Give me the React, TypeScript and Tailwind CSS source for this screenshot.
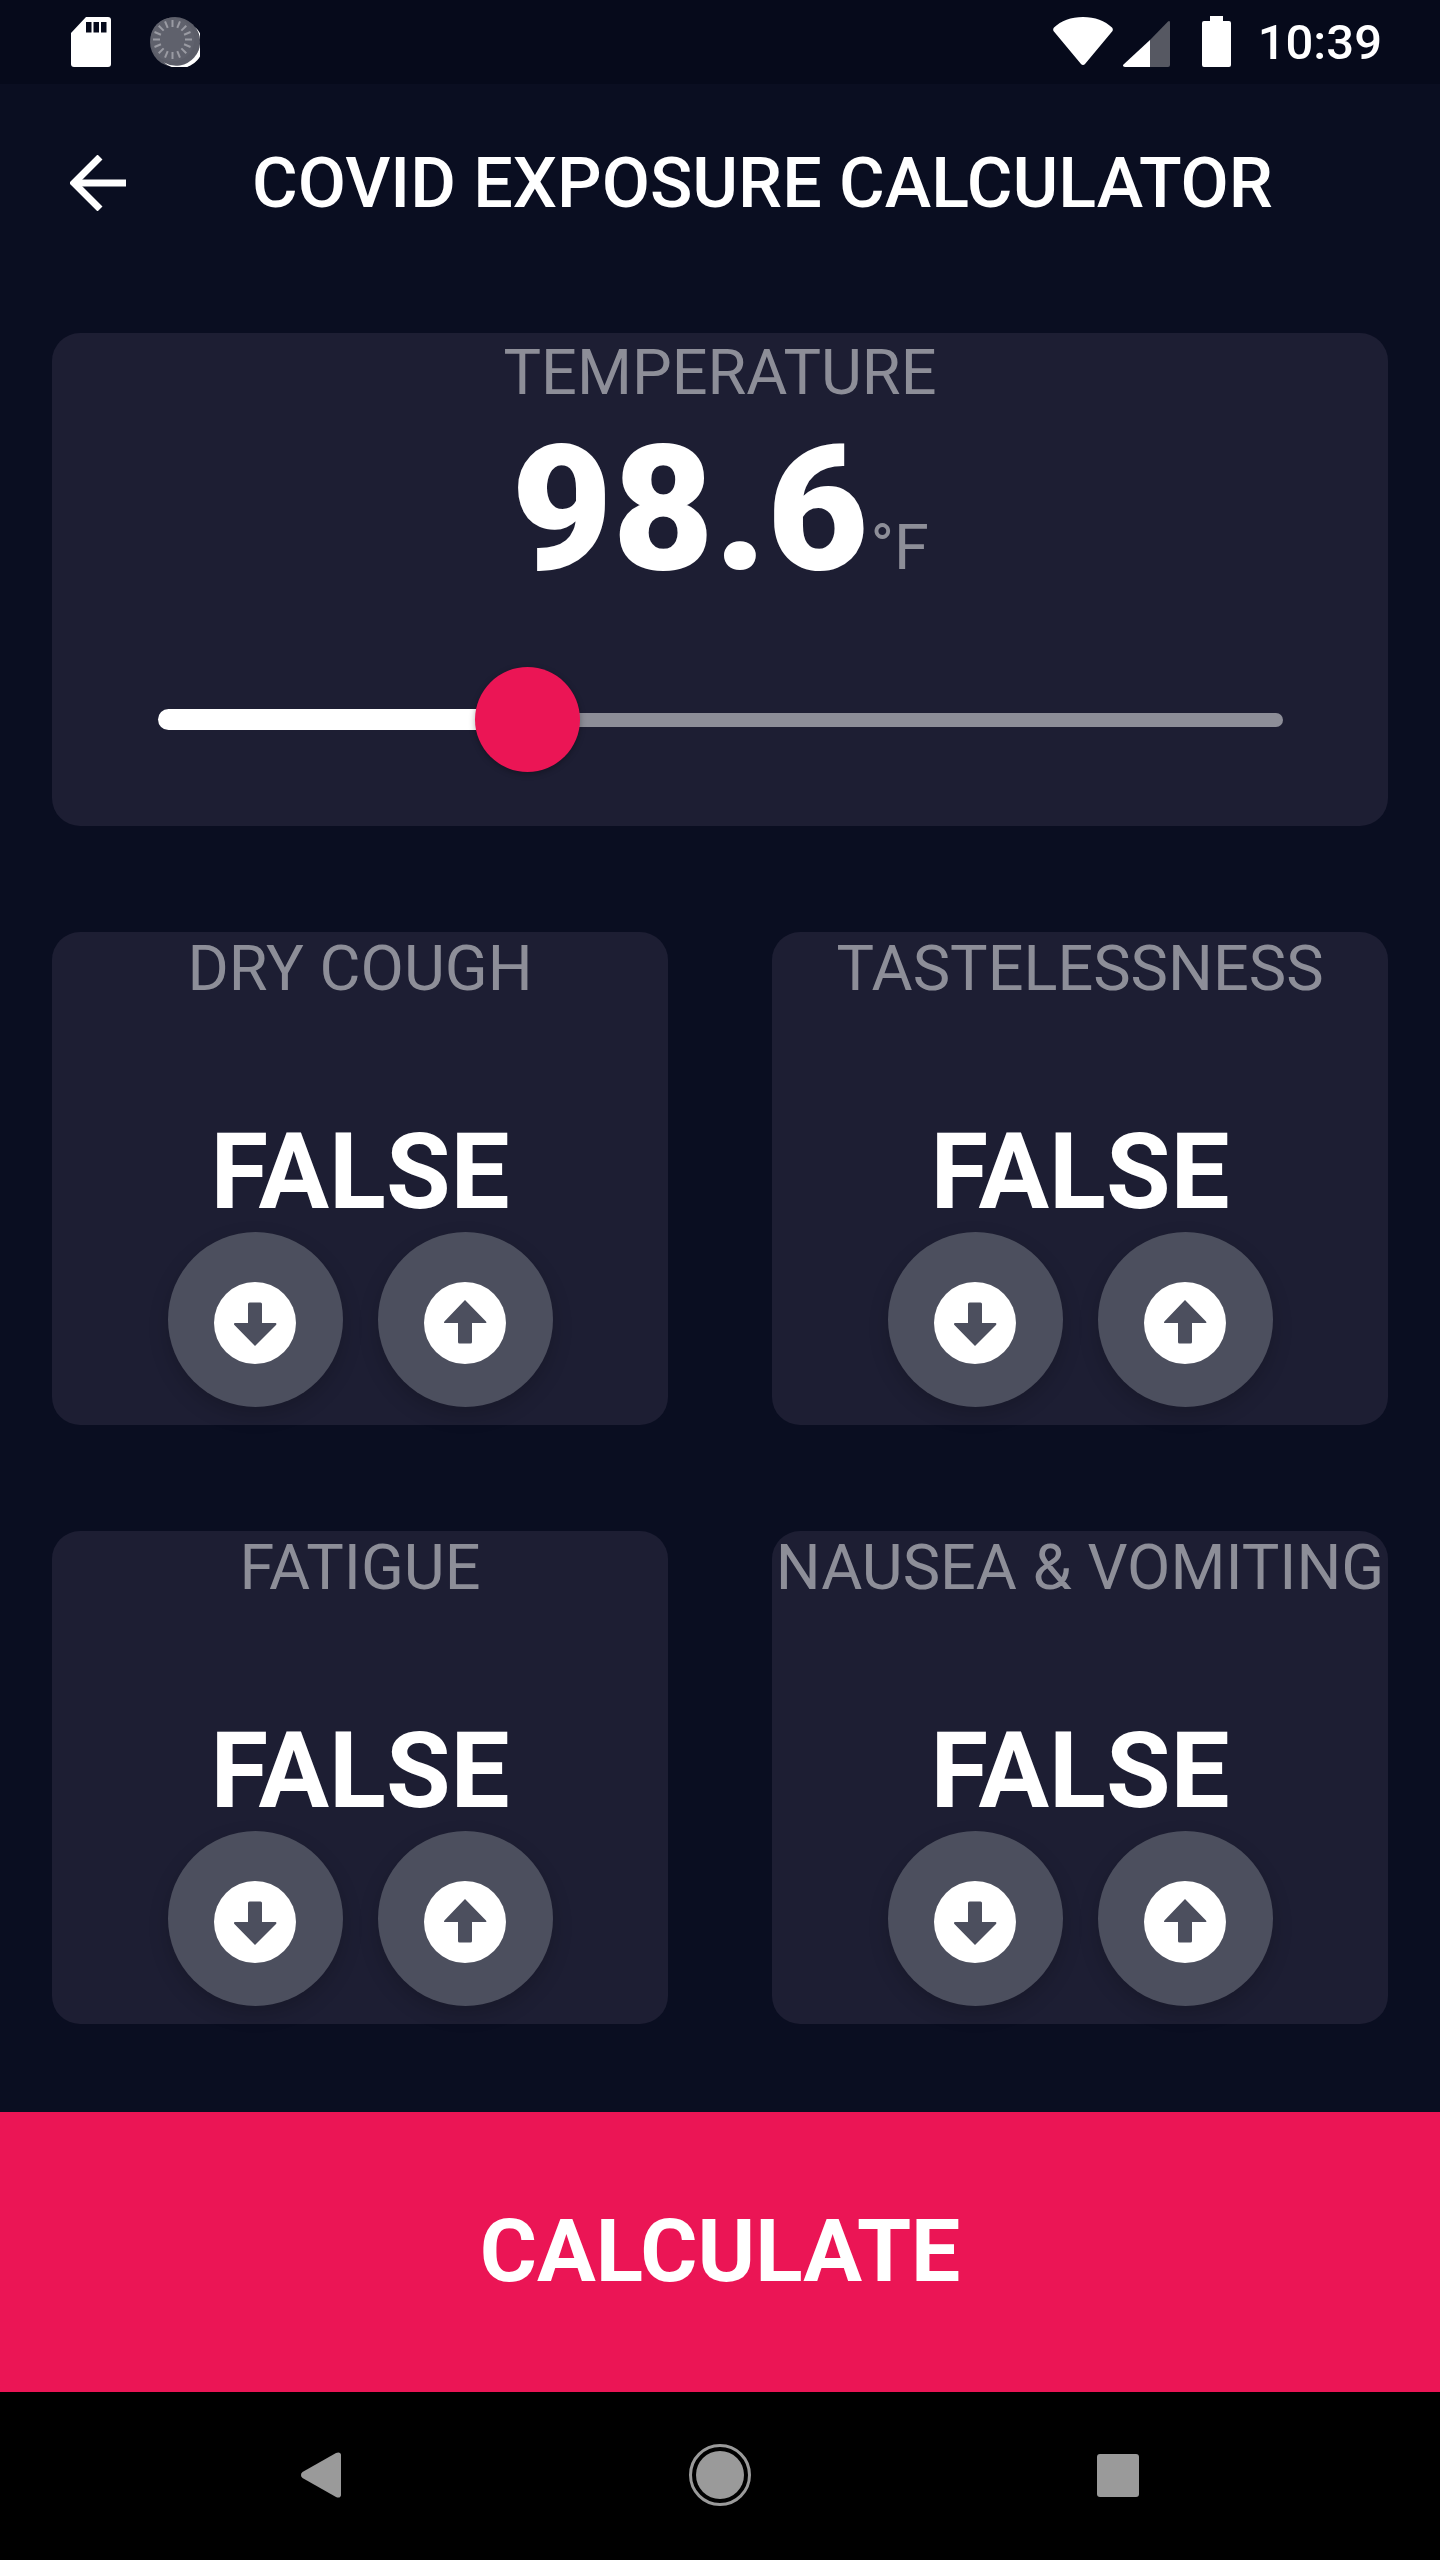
import { FC } from 'react';

const SdCard: FC = () => (
  <svg width="40" height="50" viewBox="0 0 40 50" className="ml-[71px]">
    <path d="M15 0H37a3 3 0 0 1 3 3V47a3 3 0 0 1-3 3H3a3 3 0 0 1-3-3V16z" fill="#fff" />
    <rect x="15" y="5" width="5.500" height="10.500" fill="#060a1b" />
    <rect x="22.500" y="5" width="5.500" height="10.500" fill="#060a1b" />
    <rect x="30" y="5" width="5.500" height="10.500" fill="#060a1b" />
  </svg>
);

const Spinner: FC = () => (
  <svg width="50" height="50" viewBox="0 0 50 50" className="ml-[39px]">
    <circle cx="25" cy="25" r="25" fill="#5b5d68" />
    <path d="M45 10A22 22 0 0 1 14 45.500A24 24 0 0 0 45 10z" fill="#fff" />
    <circle cx="22.500" cy="22.500" r="22" fill="#5f616c" />
    {Array.from({ length: 16 }).map((_, i) => (
      <rect key={i} x="21.500" y="3" width="2" height="7" fill="#9a9ba3" transform={`rotate(${i * 22.5} 22.500 22.500)`} />
    ))}
  </svg>
);

const StatusRight: FC = () => (
  <div className="flex items-start ml-auto mt-[-1px]">
    <svg width="60" height="48" viewBox="0 0 60 48" className="mt-[1px]">
      <path d="M1 10.500C8 4 18 0 30 0s22 4 29 10.500c1 1 1 2.500 .5 3.500L32 47c-1 1.300-3 1.300-4 0L.5 14C0 13 0 11.500 1 10.500z" fill="#fff" />
    </svg>
    <svg width="47" height="47" viewBox="0 0 47 47" className="ml-[10px] mt-[4px]">
      <path d="M27 20V47H2C0 47-.5 45.500 .5 44.500z" fill="#fff" />
      <path d="M27 20L45 1.500C46 .5 47 1 47 2.500V45a2 2 0 0 1-2 2H27z" fill="#565862" />
    </svg>
    <svg width="29" height="51" viewBox="0 0 29 51" className="ml-[32px]">
      <path d="M8 0H21V5H27a2 2 0 0 1 2 2V49a2 2 0 0 1-2 2H2a2 2 0 0 1-2-2V7a2 2 0 0 1 2-2H8z" fill="#fff" />
    </svg>
    <span className="ml-[27px] mr-[58px] mt-[2px] text-[49px] leading-none font-medium text-white">10:39</span>
  </div>
);

const ArrowCircle: FC<{ up?: boolean }> = ({ up }) => (
  <svg width="82" height="82" viewBox="0 0 82 82" className="mt-[7px]">
    <circle cx="41" cy="41" r="41" fill="#fff" />
    {up ? (
      <path d="M41 18L62 39.500C62.800 40.500 62.400 41 61.500 41H48V60a1.500 1.500 0 0 1-1.500 1.500H35.500a1.500 1.500 0 0 1-1.500-1.500V41H21C20 41 19.600 40.500 20.400 39.500z" fill="#4c4f5e" />
    ) : (
      <path d="M41 64L20.400 43C19.600 42 20 41 21 41H34V22a1.500 1.500 0 0 1 1.500-1.500H46.500a1.500 1.500 0 0 1 1.500 1.500V41H61.500C62.400 41 62.800 42 62 43z" fill="#4c4f5e" />
    )}
  </svg>
);

const RoundButton: FC<{ up?: boolean }> = ({ up }) => (
  <div className="w-[175px] h-[175px] rounded-full bg-[#4c4f5e] flex items-center justify-center shadow-[0_8px_20px_rgba(0,0,0,0.18)]">
    <ArrowCircle up={up} />
  </div>
);

const SymptomCard: FC<{ label: string }> = ({ label }) => (
  <div className="h-[493px] rounded-[28px] bg-[#1d1e33] flex flex-col items-center">
    <div className="text-[63px] leading-[74px] text-[#8d8e98] whitespace-nowrap">{label}</div>
    <div className="mt-[105px] text-[105px] leading-[123px] font-bold text-white">FALSE</div>
    <div className="flex gap-[35px] mt-[-2px]">
      <RoundButton />
      <RoundButton up />
    </div>
  </div>
);

const App: FC = () => {
  return (
    <div className="w-[1440px] h-[2560px] flex flex-col bg-[#0a0e21] font-[family-name:Roboto,sans-serif] overflow-hidden">
      <div className="h-[84px] bg-[#060a1b] flex items-start pt-[17px]">
        <SdCard />
        <Spinner />
        <StatusRight />
      </div>

      <div className="h-[249px] flex items-center pl-[70px] pb-[51px]">
        <svg width="56" height="56" viewBox="0 0 56 56" fill="none" stroke="#fff" strokeWidth="7">
          <path d="M56 28H4" />
          <path d="M30 2L4 28L30 54" />
        </svg>
        <h1 className="ml-[126px] text-[70px] leading-none font-medium text-white whitespace-nowrap">COVID EXPOSURE CALCULATOR</h1>
      </div>

      <div className="px-[52px]">
        <div className="h-[493px] rounded-[28px] bg-[#1d1e33] flex flex-col items-center">
          <div className="pt-[3px] text-[63px] leading-[74px] text-[#8d8e98]">TEMPERATURE</div>
          <div className="flex items-baseline h-[190px] mt-[5px]">
            <span className="text-[175px] leading-[190px] font-black text-white">98.6</span>
            <span className="ml-[2px] text-[63px] leading-none text-[#8d8e98]">°F</span>
          </div>
          <div className="relative w-[1125px] h-[21px] mt-[104px] flex items-center">
            <div className="w-[369px] h-[21px] bg-white rounded-l-full" />
            <div className="flex-1 h-[14px] bg-[#8d8e98] rounded-r-full" />
            <div className="absolute left-[317px] top-[-42px] w-[105px] h-[105px] rounded-full bg-[#eb1555] shadow-[0_2px_6px_rgba(0,0,0,0.3)]" />
          </div>
        </div>

        <div className="grid grid-cols-2 gap-x-[104px] gap-y-[106px] mt-[106px]">
          <SymptomCard label="DRY COUGH" />
          <SymptomCard label="TASTELESSNESS" />
          <SymptomCard label="FATIGUE" />
          <SymptomCard label="NAUSEA & VOMITING" />
        </div>
      </div>

      <div className="mt-[88px] h-[280px] bg-[#eb1555] flex items-center justify-center">
        <span className="text-[87.500px] font-bold text-white">CALCULATE</span>
      </div>

      <div className="flex-1 bg-black flex items-center pb-[2px]">
        <svg width="40" height="46" viewBox="0 0 40 46" className="ml-[301px]">
          <path d="M1.500 20L35 1C38 -.5 40 1 40 3V43c0 2-2 3.500-5 2L1.500 26c-2-1.500-2-4.500 0-6z" fill="#9a9a9a" />
        </svg>
        <div className="ml-[348px] w-[62px] h-[62px] rounded-full border-[3px] border-[#9a9a9a] flex items-center justify-center">
          <div className="w-[48px] h-[48px] rounded-full bg-[#9a9a9a]" />
        </div>
        <div className="ml-[346px] w-[42px] h-[43px] rounded-[3px] bg-[#9a9a9a]" />
      </div>
    </div>
  );
};

export default App;
